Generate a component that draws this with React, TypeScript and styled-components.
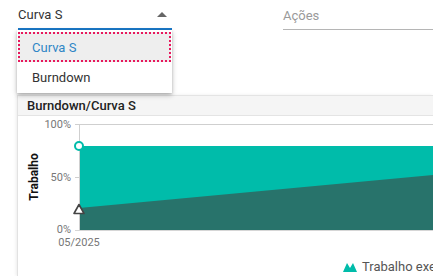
import React from 'react'
import styled, {createGlobalStyle} from 'styled-components'

const GlobalStyle = createGlobalStyle`
  body {
    margin: 0;
    background: #fff;
    font-family: Roboto, "Liberation Sans", sans-serif;
    overflow: hidden;
  }
`

const TEAL = '#00bcaa'
const DARK = '#28736b'

type FieldProps = { width: number, focused?: boolean }

const App = () => {
  return (
    <Page>
      <GlobalStyle />
      <Toolbar>
        <Field width={154} focused>
          <FieldText>Curva S</FieldText>
          <Arrow />
          <Menu>
            <MenuItem selected>Curva S</MenuItem>
            <MenuItem>Burndown</MenuItem>
          </Menu>
        </Field>
        <Field width={160}>
          <FieldText muted>Ações</FieldText>
        </Field>
      </Toolbar>
      <Card>
        <CardHeader>Burndown/Curva S</CardHeader>
        <Chart />
        <Legend>
          <LegendIcon width="14" height="10" viewBox="0 0 14 10">
            <path d="M0 10 L4 1 L7 6 L10 1 L14 10 Z" fill={TEAL} />
          </LegendIcon>
          Trabalho executado
        </Legend>
      </Card>
    </Page>
  )
}

const Chart = () => (
  <ChartSvg width="416" height="140" viewBox="0 0 416 140">
    <line x1="57" y1="8.5" x2="416" y2="8.5" stroke="#cfcfcf" />
    <rect x="61" y="30" width="355" height="84" fill={TEAL} />
    <polygon points="61,92 416,59 416,114 61,114" fill={DARK} />
    <line x1="61.5" y1="8" x2="61.5" y2="114" stroke="#cfcfcf" />
    <line x1="57" y1="114.5" x2="416" y2="114.5" stroke="#d6d6d6" />
    <line x1="57" y1="61.5" x2="61" y2="61.5" stroke="#cfcfcf" />
    <AxisLabel x="53" y="12" textAnchor="end">100%</AxisLabel>
    <AxisLabel x="53" y="65" textAnchor="end">50%</AxisLabel>
    <AxisLabel x="53" y="117" textAnchor="end">0%</AxisLabel>
    <AxisLabel x="61" y="130" textAnchor="middle">05/2025</AxisLabel>
    <AxisTitle x="0" y="0" transform="translate(20 61) rotate(-90)" textAnchor="middle">Trabalho</AxisTitle>
    <circle cx="61" cy="30" r="4" fill="#fff" stroke={TEAL} strokeWidth="2" />
    <polygon points="61,88.5 66,97.5 56,97.5" fill="#fff" stroke="#444" strokeWidth="1.6" strokeLinejoin="round" />
  </ChartSvg>
)

export default App

const Page = styled.div`
  width: 433px;
  height: 276px;
  position: relative;
  overflow: hidden;
`

const Toolbar = styled.div`
  display: flex;
  gap: 111px;
  padding-left: 18px;
  height: 30px;
  margin-bottom: 65px;
`

const Field = styled.div<FieldProps>`
  position: relative;
  flex: 0 0 ${p => p.width}px;
  height: 30px;
  box-sizing: border-box;
  display: flex;
  align-items: center;
  border-bottom: ${p => p.focused ? '2px solid #1b78c8' : '1px solid #b5b5b5'};
`

const FieldText = styled.span<{ muted?: boolean }>`
  font-size: 13px;
  color: ${p => p.muted ? '#9a9a9a' : '#333'};
  margin-top: ${p => p.muted ? '1px' : '0'};
`

const Arrow = styled.span`
  position: absolute;
  right: 5px;
  top: 12px;
  width: 0;
  height: 0;
  border-left: 5px solid transparent;
  border-right: 5px solid transparent;
  border-bottom: 5px solid #666;
`

const Menu = styled.div`
  position: absolute;
  left: -1px;
  top: 30px;
  width: 155px;
  background: #fff;
  box-shadow: 0 2px 5px rgba(0, 0, 0, 0.28), 0 1px 2px rgba(0, 0, 0, 0.12);
  padding: 2px 0 1px;
  z-index: 5;
`

const MenuItem = styled.div<{ selected?: boolean }>`
  height: 30px;
  display: flex;
  align-items: center;
  padding-left: 14px;
  font-size: 13px;
  box-sizing: border-box;
  color: ${p => p.selected ? '#2f86c6' : '#333'};
  background: ${p => p.selected ? '#eeeeee' : 'transparent'};
  outline: ${p => p.selected ? '2px dotted #e8185d' : 'none'};
  outline-offset: -2px;
  margin: 0 1px;
`

const Card = styled.div`
  margin-left: 17px;
  border-left: 1px solid #e2e2e2;
  box-shadow: -1px 0 3px rgba(0, 0, 0, 0.08);
  height: 181px;
`

const CardHeader = styled.div`
  height: 19px;
  display: flex;
  align-items: center;
  padding-left: 9px;
  background: #f5f5f5;
  border-top: 1px solid #e4e4e4;
  border-bottom: 1px solid #e4e4e4;
  font-size: 13px;
  font-weight: 500;
  color: #222;
`

const ChartSvg = styled.svg`
  display: block;
`

const AxisLabel = styled.text`
  font-family: Roboto, "Liberation Sans", sans-serif;
  font-size: 11px;
  fill: #777;
`

const AxisTitle = styled.text`
  font-family: Roboto, "Liberation Sans", sans-serif;
  font-size: 12px;
  font-weight: 700;
  fill: #111;
`

const Legend = styled.div`
  display: flex;
  align-items: center;
  gap: 5px;
  padding-left: 325px;
  margin-top: 3px;
  font-size: 13px;
  color: #555;
  white-space: nowrap;
`

const LegendIcon = styled.svg`
  flex: 0 0 auto;
`
